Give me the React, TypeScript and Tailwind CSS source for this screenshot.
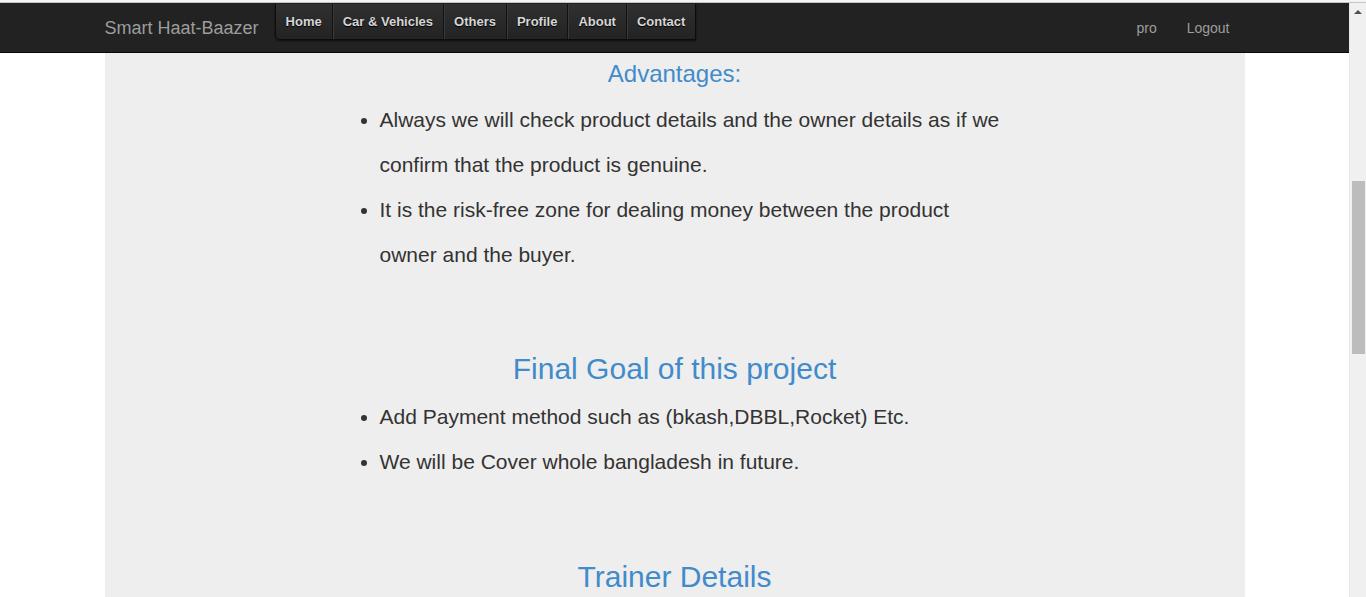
import React from "react";

const navItems = ["Home", "Car & Vehicles", "Others", "Profile", "About", "Contact"];

export default function App() {
  return (
    <div className="w-full h-[597px] overflow-hidden bg-white font-['Liberation_Sans',Arial,sans-serif] text-[#333]">
      <div className="h-[3px] bg-[#f4f4f4] border-b border-[#c4c4c4]" />
      <div className="flex h-[594px]">
        <div className="flex-1 flex flex-col min-w-0">
          {/* Navbar */}
          <div className="h-[50px] bg-[#222] border-b border-[#080808] shrink-0">
            <div className="w-[1170px] mx-auto px-[15px] flex items-start h-full">
              <div className="h-[49px] pt-[1px] flex items-center text-[18px] text-[#9d9d9d] pr-[16px]">
                Smart Haat-Baazer
              </div>
              <div className="mt-[1px] flex h-[36px] border border-[#0c0c0c] border-t-0 rounded-bl-[5px] bg-gradient-to-b from-[#303030] to-[#232323] shadow-[0_1px_2px_rgba(0,0,0,0.6)]">
                {navItems.map((item, i) => (
                  <div
                    key={item}
                    className={`flex items-center px-[10px] text-[13px] font-bold text-[#d6d6d6] [text-shadow:0_1px_1px_#000] ${
                      i > 0 ? "border-l border-[#111] shadow-[inset_1px_0_0_#3a3a3a]" : ""
                    } ${i === 0 ? "rounded-bl-[5px]" : ""}`}
                  >
                    {item}
                  </div>
                ))}
              </div>
              <div className="ml-auto flex h-[49px] pt-[2px] items-center text-[14px] text-[#9d9d9d]">
                <span className="px-[15px]">pro</span>
                <span className="px-[15px]">Logout</span>
              </div>
            </div>
          </div>
          {/* Content */}
          <div className="w-[1170px] mx-auto px-[15px] flex-1">
            <div className="bg-[#eeeeee] h-full pt-[8px]">
              <h3 className="text-center text-[24px] leading-[26px] text-[#428bca]">Advantages:</h3>
              <ul className="list-disc ml-[235px] w-[665px] pl-[40px] mt-[10px] text-[21px] leading-[45px] text-[#333]">
                <li>Always we will check product details and the owner details as if we confirm that the product is genuine.</li>
                <li>It is the risk-free zone for dealing money between the product owner and the buyer.</li>
              </ul>
              <h2 className="mt-[75px] text-center text-[30px] leading-[33px] text-[#428bca]">Final Goal of this project</h2>
              <ul className="list-disc ml-[235px] w-[665px] pl-[40px] mt-[9px] text-[21px] leading-[45px] text-[#333]">
                <li>Add Payment method such as (bkash,DBBL,Rocket) Etc.</li>
                <li>We will be Cover whole bangladesh in future.</li>
              </ul>
              <h2 className="mt-[76px] text-center text-[30px] leading-[33px] text-[#428bca]">Trainer Details</h2>
            </div>
          </div>
        </div>
        {/* Scrollbar */}
        <div className="w-[17px] bg-[#f0f0f0] border-l border-[#e8e8e8] flex flex-col items-center shrink-0">
          <div className="h-[17px] w-full flex items-center justify-center">
            <svg width="8" height="5" viewBox="0 0 8 5">
              <path d="M0 5 L4 1 L8 5 Z" fill="#505050" />
            </svg>
          </div>
          <div className="mt-[161px] w-[13px] h-[173px] bg-[#bcbcbc]" />
        </div>
      </div>
    </div>
  );
}
